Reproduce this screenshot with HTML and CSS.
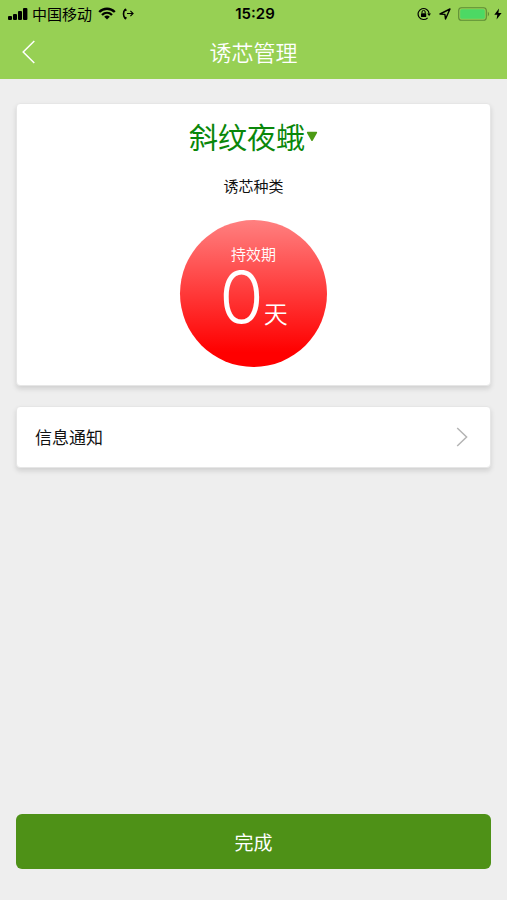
FILE: index.html
```html
<!DOCTYPE html>
<html lang="zh-CN">
<head>
    <meta charset="UTF-8">
    <meta name="viewport" content="width=device-width, initial-scale=1.0">
    <title>诱芯管理</title>
    <link rel="stylesheet" href="styles.css">
</head>
<body>
    <header class="header">
        <div class="status">
            <div class="status-left">
                <svg width="20" height="12" viewBox="0 0 20 12">
                    <rect x="0" y="8" width="4" height="4" rx="1"/>
                    <rect x="5" y="6" width="4" height="6" rx="1"/>
                    <rect x="10" y="3" width="4" height="9" rx="1"/>
                    <rect x="15" y="0" width="4.4" height="12" rx="1"/>
                </svg>
                <span class="carrier">中国移动</span>
                <svg class="wifi" width="18" height="13" viewBox="0 0 18 13" fill="none" stroke="#000" stroke-width="2.4">
                    <path d="M1.2 5C5.6 .7 12.4 .7 16.8 5"/>
                    <path d="M4 8C6.9 5.2 11.1 5.2 14 8"/>
                    <path d="M9 12.6L6.2 9.8Q9 7.4 11.8 9.8Z" fill="#000" stroke="none"/>
                </svg>
                <svg width="12" height="12" viewBox="0 0 12 12" fill="none" stroke="#000">
                    <path d="M3.6 1.2C.8 3.4.8 8.6 3.6 10.8" stroke-width="1.6"/>
                    <path d="M2.8 2.2L4.4 1.4M2.8 9.8L4.4 10.6" stroke-width="2.2"/>
                    <path d="M5 5.5H11M8.4 2.8L11.1 5.5L8.4 8.2" stroke-width="1.1"/>
                </svg>
            </div>
            <span class="time">15:29</span>
            <div class="status-right">
                <svg width="14" height="14" viewBox="0 0 14 14">
                    <path d="M12.1 6.6A5.5 5.5 0 1 0 10.6 10.8" fill="none" stroke="#000" stroke-width="1.2"/>
                    <path d="M10.2 6.4H14L12.1 9Z"/>
                    <rect x="4" y="6.2" width="5.2" height="3.8" rx=".6"/>
                    <path d="M5 6.4V5A1.6 1.6 0 0 1 8.2 5V6.4" fill="none" stroke="#000" stroke-width="1"/>
                </svg>
                <svg class="locate" width="12" height="12" viewBox="0 0 12 12">
                    <path d="M1 6L11 1L6.5 11L5.9 6.4Z" fill="none" stroke="#000" stroke-width="1.4" stroke-linejoin="round"/>
                </svg>
                <svg class="battery" width="32" height="14" viewBox="0 0 32 14">
                    <rect x=".7" y=".7" width="27.6" height="12.6" rx="2.8" fill="none" stroke="#5c8a35" stroke-width="1.1"/>
                    <rect x="2.2" y="2.2" width="24.6" height="9.6" rx="1.5" fill="#4cd964"/>
                    <path d="M29.8 4.6Q32.4 7 29.8 9.4Z" fill="#5c8a35"/>
                </svg>
                <svg width="8" height="12" viewBox="0 0 8 12">
                    <path d="M5 .4L.3 6.8H3.3L2.6 11.6L7.6 4.9H4.4Z"/>
                </svg>
            </div>
        </div>
        <nav class="nav">
            <button type="button" class="back" aria-label="返回">
                <svg width="13" height="24" viewBox="0 0 13 24" fill="none" stroke="#fff" stroke-width="1.5">
                    <path d="M12.3 1L1.2 12L12.3 23"/>
                </svg>
            </button>
            <h1 class="title">诱芯管理</h1>
        </nav>
    </header>

    <main class="content">
        <section class="card lure">
            <div class="picker">
                <select id="lure" class="picker-select">
                    <option>斜纹夜蛾</option>
                </select>
                <svg width="12" height="11" viewBox="0 0 12 11">
                    <path d="M1.6 .8H10.4Q11.6 .8 11 2L6.8 9.4Q6 10.6 5.2 9.4L1 2Q.4 .8 1.6 .8Z" fill="#4c9a14"/>
                </svg>
            </div>
            <label for="lure" class="picker-label">诱芯种类</label>
            <div class="circle">
                <span class="circle-label">持效期</span>
                <div class="days">
                    <span class="number">0</span>
                    <span class="unit">天</span>
                </div>
            </div>
        </section>

        <a href="#notice" class="card notice">
            <span>信息通知</span>
            <svg width="12" height="20" viewBox="0 0 12 20" fill="none" stroke="#b4b4b4" stroke-width="1.5">
                <path d="M1.2 1L10.6 10L1.2 19"/>
            </svg>
        </a>
    </main>

    <footer class="footer">
        <button type="button" class="done">完成</button>
    </footer>
</body>
</html>
```
FILE: styles.css
```css
* {
    box-sizing: border-box;
}
body {
    margin: 0;
    min-height: 100vh;
    display: flex;
    flex-direction: column;
    background-color: #eee;
    color: #111;
    font-family: "Noto Sans CJK SC", sans-serif;
}
svg {
    display: block;
    flex: none;
}
button, select {
    font-family: inherit;
    border: none;
    cursor: pointer;
}

/* 顶部 */
.header {
    background-color: #97d054;
}
.status {
    display: grid;
    grid-template-columns: 1fr auto 1fr;
    align-items: center;
    height: 27px;
    padding: 0 5px 0 8px;
    color: #000;
}
.status-left, .status-right {
    display: flex;
    align-items: center;
}
.status-right {
    justify-content: flex-end;
}
.carrier {
    margin: 0 6px 0 4px;
    font-size: 15px;
    line-height: 24px;
}
.wifi {
    margin-right: 6px;
}
.time {
    font-family: Inter, sans-serif;
    font-size: 15px;
    font-weight: 600;
}
.locate {
    margin: 0 7px 0 8px;
}
.battery {
    margin-right: 4px;
}
.nav {
    display: grid;
    grid-template-columns: 60px 1fr 60px;
    align-items: start;
    height: 52px;
}
.back {
    padding: 13px 22px;
    background: none;
}
.title {
    margin: 0;
    color: #fff;
    font-size: 22px;
    font-weight: 350;
    line-height: 48px;
    text-align: center;
}

/* 卡片 */
.content {
    flex: 1;
    display: flex;
    flex-direction: column;
    gap: 20px;
    padding: 24px 16px;
}
.card {
    background-color: #fff;
    border: 1px solid #e6e6e6;
    border-radius: 4px;
    box-shadow: 0 3px 5px rgba(0, 0, 0, 0.12);
}
.lure {
    display: flex;
    flex-direction: column;
    align-items: center;
    padding: 10px 16px 18px;
}
.picker {
    display: flex;
    align-items: center;
}
.picker-select {
    appearance: none;
    padding: 0;
    background: none;
    color: #0a870a;
    font-size: 29px;
    line-height: 44px;
}
.picker-label {
    margin: 16px 0 22px;
    font-size: 15px;
    line-height: 24px;
}
.circle {
    display: flex;
    flex-direction: column;
    align-items: center;
    width: 147px;
    height: 147px;
    padding-top: 23px;
    border-radius: 50%;
    background: linear-gradient(#ff8080, #f00 90%);
    color: #fff;
}
.circle-label {
    font-size: 15px;
    font-weight: 350;
    line-height: 22px;
}
.days {
    display: flex;
    align-items: baseline;
}
.number {
    font-family: Inter, sans-serif;
    font-size: 72px;
    font-weight: 350;
    line-height: 64px;
}
.unit {
    font-size: 24px;
    font-weight: 350;
    line-height: 32px;
}
.notice {
    display: flex;
    align-items: center;
    justify-content: space-between;
    padding: 18px;
    padding-right: 22px;
    color: #111;
    font-size: 17px;
    line-height: 24px;
    text-decoration: none;
}

/* 底部按钮 */
.footer {
    padding: 0 16px 31px;
}
.done {
    display: block;
    width: 100%;
    padding: 12px;
    border-radius: 6px;
    background-color: #4e9117;
    color: #fff;
    font-size: 19px;
    line-height: 31px;
}
```
